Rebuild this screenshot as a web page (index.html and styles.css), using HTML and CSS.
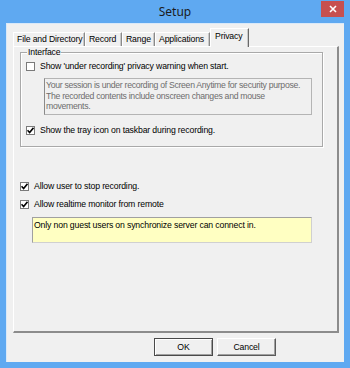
FILE: index.html
```html
<!DOCTYPE html>
<html>
<head>
<meta charset="utf-8">
<link rel="stylesheet" href="styles.css">
</head>
<body>
<div class="window">
  <div class="titlebar">
    <span class="title">Setup</span>
    <div class="close">
      <svg width="8" height="8" viewBox="0 0 8 8"><path d="M1 1L7 7M7 1L1 7" stroke="#fff" stroke-width="1.6"/></svg>
    </div>
  </div>
  <div class="client">
    <div class="tabs">
      <div class="tab t1">File and Directory</div>
      <div class="tab t2">Record</div>
      <div class="tab t3">Range</div>
      <div class="tab t4">Applications</div>
      <div class="tab active t5">Privacy</div>
    </div>
    <div class="panel">
      <div class="group">
        <span class="legend">Interface</span>
        <label class="row">
          <span class="box"></span>
          <span>Show 'under recording' privacy warning when start.</span>
        </label>
        <div class="note">Your session is under recording of Screen Anytime for security purpose. The recorded contents include onscreen changes and mouse movements.</div>
        <label class="row row2">
          <span class="box checked"><svg width="7" height="7" viewBox="0 0 7 7"><path d="M0.5 3.2L2.6 5.5L6.5 0.8" fill="none" stroke="#000" stroke-width="1.6"/></svg></span>
          <span>Show the tray icon on taskbar during recording.</span>
        </label>
      </div>
      <label class="row opt first">
        <span class="box checked"><svg width="7" height="7" viewBox="0 0 7 7"><path d="M0.5 3.2L2.6 5.5L6.5 0.8" fill="none" stroke="#000" stroke-width="1.6"/></svg></span>
        <span>Allow user to stop recording.</span>
      </label>
      <label class="row opt">
        <span class="box checked"><svg width="7" height="7" viewBox="0 0 7 7"><path d="M0.5 3.2L2.6 5.5L6.5 0.8" fill="none" stroke="#000" stroke-width="1.6"/></svg></span>
        <span>Allow realtime monitor from remote</span>
      </label>
      <div class="info">Only non guest users on synchronize server can connect in.</div>
    </div>
    <div class="buttons">
      <div class="btn default">OK</div>
      <div class="btn">Cancel</div>
    </div>
  </div>
</div>
</body>
</html>
```

FILE: styles.css
```css
html, body {
  margin: 0;
  padding: 0;
}
body {
  width: 350px;
  height: 368px;
  overflow: hidden;
  font-family: "Liberation Sans", Arial, sans-serif;
  font-size: 8.7px;
  letter-spacing: -0.15px;
  color: #000;
}
.window {
  width: 350px;
  height: 368px;
  background: #5fa9f1;
  display: flex;
  flex-direction: column;
  box-sizing: border-box;
}
.titlebar {
  height: 23px;
  position: relative;
  display: flex;
  align-items: center;
  justify-content: center;
  flex: none;
}
.title {
  font-family: "Noto Sans", "Open Sans", sans-serif;
  font-size: 12px;
  letter-spacing: 0;
  color: #1c1c1c;
  margin-top: -1px;
}
.close {
  position: absolute;
  right: 6px;
  top: 1px;
  width: 23px;
  height: 16px;
  background: #c75050;
  display: flex;
  align-items: center;
  justify-content: center;
}
.client {
  flex: 1;
  margin: 0 6px 6px 6px;
  background: #f0f0f0;
  border-left: 1px solid #d9e9f9;
  border-top: 1px solid #d9e9f9;
  box-sizing: border-box;
  padding: 4px 5px 0 6px;
  display: flex;
  flex-direction: column;
}
.tabs {
  display: flex;
  align-items: flex-end;
  height: 18px;
  position: relative;
  z-index: 2;
}
.tab {
  height: 14px;
  box-sizing: border-box;
  border-top: 1px solid #fff;
  border-left: 1px solid #fff;
  border-right: 1px solid #8a8a8a;
  box-shadow: inset -1px 0 0 #c8c8c8;
  padding: 0 0 0 3px;
  line-height: 13px;
  white-space: nowrap;
  overflow: hidden;
  background: #f0f0f0;
}
.t1 { width: 72px; }
.t2 { width: 37px; }
.t3 { width: 33px; }
.t4 { width: 55px; }
.t5 { width: 39px; }
.tab.active {
  height: 19px;
  margin-bottom: -1px;
  line-height: 15px;
  padding-left: 4px;
  border-right: 1px solid #696969;
}
.panel {
  height: 287px;
  box-sizing: border-box;
  border-top: 1px solid #fff;
  border-left: 1px solid #fff;
  border-right: 2px solid #8c8c8c;
  border-bottom: 2px solid #8c8c8c;
  padding: 5px 0 0 6px;
  position: relative;
}
.group {
  position: relative;
  width: 303px;
  height: 95px;
  box-sizing: border-box;
  border: 1px solid #a9a9a9;
  box-shadow: inset 1px 1px 0 #fff, 1px 1px 0 #fff;
  padding: 8px 0 0 5px;
}
.legend {
  position: absolute;
  left: 6px;
  top: -6px;
  background: #f0f0f0;
  padding: 0 1px;
  line-height: 11px;
}
.row {
  display: flex;
  align-items: center;
  gap: 5px;
  height: 11px;
  line-height: 11px;
  white-space: nowrap;
}
.box {
  width: 9px;
  height: 9px;
  box-sizing: border-box;
  border: 1px solid #7a7a7a;
  background: #fff;
  flex: none;
  display: flex;
  align-items: center;
  justify-content: center;
}
.box svg { display: block; }
.note {
  margin: 6px 0 0 18px;
  width: 268px;
  height: 37px;
  box-sizing: border-box;
  border: 1px solid #b4b4b4;
  border-left-color: #8a8a8a;
  color: #6d6d6d;
  padding: 1px 1px;
  letter-spacing: -0.3px;
  line-height: 10.5px;
}
.row2 { margin-top: 10px; }
.opt { margin-top: 7px; }
.opt.first { margin-top: 34px; }
.info {
  margin: 7px 0 0 12px;
  width: 280px;
  height: 26px;
  box-sizing: border-box;
  background: #ffffc2;
  border: 1px solid #d0d0d0;
  border-left-color: #a0a0a0;
  border-top-color: #a0a0a0;
  padding: 2px 1px;
  line-height: 11px;
}
.buttons {
  display: flex;
  justify-content: flex-end;
  gap: 4px;
  margin-top: 5px;
  padding-right: 63px;
}
.btn {
  width: 59px;
  height: 18px;
  box-sizing: border-box;
  border-top: 1px solid #fff;
  border-left: 1px solid #fff;
  border-right: 1px solid #5a5a5a;
  border-bottom: 1px solid #5a5a5a;
  box-shadow: inset -1px -1px 0 #a0a0a0;
  background: #f0f0f0;
  text-align: center;
  line-height: 16px;
}
.btn.default {
  border-color: #4a4a4a;
  box-shadow: inset 1px 1px 0 #fff, inset -1px -1px 0 #a0a0a0;
}
```
